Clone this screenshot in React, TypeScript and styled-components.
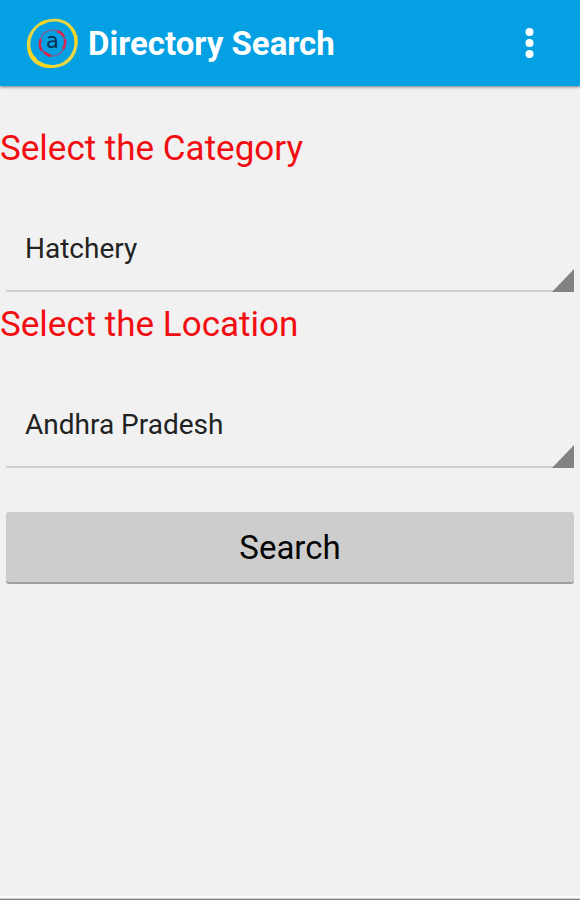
import { useState } from "react";
import styled, { createGlobalStyle } from "styled-components";

const GlobalStyle = createGlobalStyle`
  * {
    box-sizing: border-box;
  }
  body {
    margin: 0;
    background: #f1f1f1;
    font-family: Roboto, "Liberation Sans", sans-serif;
  }
`;

const Screen = styled.div`
  display: flex;
  flex-direction: column;
  min-height: 100vh;
  background: #f1f1f1;
`;

const AppBar = styled.header`
  display: flex;
  align-items: center;
  gap: 8px;
  height: 86px;
  padding: 0 24px;
  background: #03a0e4;
  box-shadow: 0 1px 3px rgba(0, 0, 0, 0.5);
`;

const Logo = styled.svg`
  flex: none;
  width: 56px;
  height: 56px;
`;

const Title = styled.h1`
  flex: 1;
  margin: 0;
  padding-top: 2px;
  color: #fff;
  font-size: 33px;
  font-weight: 700;
  line-height: 40px;
`;

const MenuButton = styled.button`
  display: flex;
  padding: 0;
  border: 0;
  background: none;
  cursor: pointer;
`;

const SearchForm = styled.form`
  display: flex;
  flex: 1;
  flex-direction: column;
  padding-top: 38px;
`;

const Field = styled.div`
  display: flex;
  flex-direction: column;
  margin-bottom: 8px;
`;

const Label = styled.label`
  color: #f20d12;
  font-size: 35px;
  line-height: 50px;
`;

const Spinner = styled.div`
  display: grid;
  margin: 30px 6px 0;
  border-bottom: 2px solid #cfcfcf;
`;

const SpinnerSelect = styled.select`
  grid-area: 1 / 1;
  width: 100%;
  height: 86px;
  padding: 2px 32px 0 19px;
  border: 0;
  appearance: none;
  background: transparent;
  color: #222;
  font-family: inherit;
  font-size: 28px;
`;

const Corner = styled.svg`
  grid-area: 1 / 1;
  align-self: end;
  justify-self: end;
  width: 22px;
  height: 23px;
  margin-bottom: -2px;
  pointer-events: none;
`;

const SearchButton = styled.button`
  height: 72px;
  margin: 36px 6px 0;
  padding: 2px 8px 0;
  border: 0;
  border-bottom: 2px solid #a0a0a0;
  border-radius: 3px;
  background: #cdcdcd;
  color: #050505;
  font-family: inherit;
  font-size: 33px;
  line-height: 40px;
  cursor: pointer;
`;

const BottomEdge = styled.footer`
  height: 4px;
  border-top: 2px solid #fcfcfc;
  border-bottom: 1px solid #828282;
  background: #d0d0d0;
`;

function BrandLogo() {
  return (
    <Logo viewBox="0 0 56 56" aria-hidden="true">
      <path
        fill="#e9d643"
        fillRule="evenodd"
        d="M28 4C41 2.500 53 11 53.500 26C54 41 44 52.500 29 53C14 54 3 45 3 31C2 18 13 5 28 4ZM30 6.500C17 6.500 8 15 6.500 27C5 40 15 49.500 28 50C40 50 49 41 50.500 29C51 16 43 6.500 30 6.500Z"
      />
      <path
        d="M48 14L51 19M52 20V30M5 33Q6 40 12 45M14 47Q20 52 29 51.500M16 9L23 6"
        stroke="#fcd51c"
        strokeWidth="3"
        fill="none"
      />
      <g fill="none">
        <ellipse cx="28.500" cy="28" rx="12.500" ry="13" stroke="#78639c" strokeWidth="1.500" />
        <path
          d="M33 16.500Q38 17 40 22M41 24Q42 29 39 34M17 24Q14 30 18 36M20 37Q23 40 27 41"
          stroke="#d9264a"
          strokeWidth="2.500"
        />
      </g>
      <text x="28.500" y="33" textAnchor="middle" fontFamily="DejaVu Sans" fontSize="21" fill="#06324f">
        a
      </text>
    </Logo>
  );
}

type SpinnerFieldProps = {
  id: string;
  label: string;
  options: string[];
};

function SpinnerField({ id, label, options }: SpinnerFieldProps) {
  const [value, setValue] = useState(options[0]);
  return (
    <Field>
      <Label htmlFor={id}>{label}</Label>
      <Spinner>
        <SpinnerSelect id={id} value={value} onChange={(e) => setValue(e.target.value)}>
          {options.map((option) => (
            <option key={option}>{option}</option>
          ))}
        </SpinnerSelect>
        <Corner viewBox="0 0 22 23" aria-hidden="true">
          <path d="M22 0V23H0Z" fill="#828282" />
        </Corner>
      </Spinner>
    </Field>
  );
}

export default function App() {
  return (
    <>
      <GlobalStyle />
      <Screen>
        <AppBar>
          <BrandLogo />
          <Title>Directory Search</Title>
          <MenuButton type="button" aria-label="More options">
            <svg width="52" height="40" viewBox="0 0 52 40" fill="#fff" aria-hidden="true">
              <circle cx="25.500" cy="9" r="4" />
              <circle cx="25.500" cy="20" r="4" />
              <circle cx="25.500" cy="31" r="4" />
            </svg>
          </MenuButton>
        </AppBar>
        <SearchForm onSubmit={(e) => e.preventDefault()}>
          <SpinnerField id="category" label="Select the Category" options={["Hatchery"]} />
          <SpinnerField id="location" label="Select the Location" options={["Andhra Pradesh"]} />
          <SearchButton type="submit">Search</SearchButton>
        </SearchForm>
        <BottomEdge />
      </Screen>
    </>
  );
}
